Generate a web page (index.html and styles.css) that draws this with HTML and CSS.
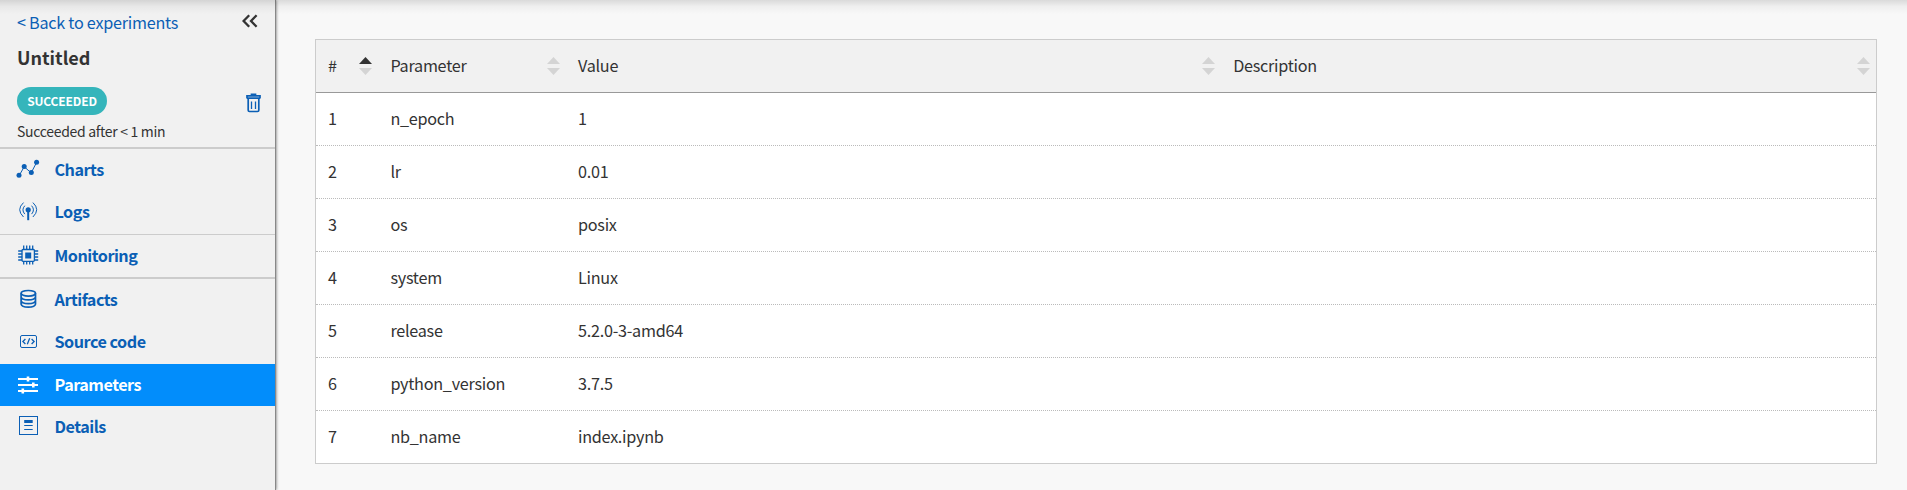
FILE: index.html
```html
<!DOCTYPE html>
<html lang="en">
<head>
<meta charset="utf-8">
<title>Untitled - Parameters</title>
<link rel="stylesheet" href="styles.css">
</head>
<body>
<div class="app">
  <aside class="sidebar">
    <header class="summary">
      <div class="top-row">
        <a class="back">&lt; Back to experiments</a>
        <svg class="collapse" width="16" height="14" viewBox="0 0 16 14"><path d="M7.2 1.2 1.6 7l5.6 5.8M14.6 1.2 9 7l5.6 5.8"/></svg>
      </div>
      <h1 class="title">Untitled</h1>
      <div class="status-row">
        <span class="badge">SUCCEEDED</span>
        <svg class="trash" width="15" height="20" viewBox="0 0 15 20"><path d="M1 5.600V2.900h13v2.700M1 5.200h13M5.500 2.400V1.300h4v1.100M2.200 5v12.200q0 1.300 1.300 1.300h8q1.300 0 1.300-1.300V5"/><path class="thin" d="M5.500 8.500v7.500M9.500 8.500v7.500"/></svg>
      </div>
      <p class="after">Succeeded after &lt; 1 min</p>
    </header>
    <nav>
      <div class="group">
        <a class="item"><svg class="icon" width="24" height="24" viewBox="0 0 24 24"><path class="line" d="M3 18.8 8.2 9.8l7 6 5.2-10"/><g class="solid"><circle cx="3" cy="18.3" r="2.5"/><circle cx="8.2" cy="9.5" r="2.5"/><circle cx="15.3" cy="15.6" r="2.5"/><circle cx="20.6" cy="5.3" r="2.5"/></g></svg><span class="label">Charts</span></a>
        <a class="item"><svg class="icon low" width="24" height="24" viewBox="0 0 24 24"><circle class="solid" cx="12.2" cy="9.8" r="2.6"/><path class="line heavy" d="M12.200 10v10.200"/><path class="line" d="M7.500 2.600q-7.600 7 0 14.400M16.900 2.600q7.600 7 0 14.400M8.800 5.700q-3.700 4.200 0 8.400M15.600 5.700q3.700 4.200 0 8.400"/></svg><span class="label">Logs</span></a>
      </div>
      <div class="group single">
        <a class="item"><svg class="icon" width="24" height="24" viewBox="0 0 24 24"><rect class="line mid" x="6" y="6.500" width="12.400" height="11.800" rx="1"/><path class="solid" d="M9.200 9.500h6v6h-6z"/><path class="line mid" d="M7.700 2.500v4M10.700 2.500v4M13.700 2.500v4M16.700 2.500v4M7.700 18.500v3M10.700 18.500v3M13.700 18.500v3M16.700 18.500v3M2.200 8h4M2.200 11h4M2.200 14h4M2.200 17h4M18.200 8h4M18.200 11h4M18.200 14h4M18.200 17h4"/></svg><span class="label">Monitoring</span></a>
      </div>
      <div class="group last">
        <a class="item"><svg class="icon" width="24" height="24" viewBox="0 0 24 24"><g class="line wide"><ellipse cx="12.300" cy="6.300" rx="7.200" ry="2.800"/><path d="M5.100 6.300v10.900q.5 3 7.200 3t7.200-3V6.300M5.100 9.800q.5 3 7.200 3t7.200-3M5.100 13.600q.5 3 7.200 3t7.200-3"/></g></svg><span class="label">Artifacts</span></a>
        <a class="item spaced"><svg class="icon low" width="24" height="24" viewBox="0 0 24 24"><rect class="line" x="4.500" y="5.500" width="16" height="12" rx="1.500"/><path class="line mid" d="M9.400 9l-2.500 2.500 2.500 2.500M15.600 9l2.500 2.500-2.500 2.500M13.700 8.300l-2.400 6"/></svg><span class="label">Source code</span></a>
        <a class="item active"><svg class="icon" width="24" height="24" viewBox="0 0 24 24"><path class="line heavy" d="M2 7h20M2 13h20M2 19h20"/><path class="solid" d="M10.700 4.500h2.600v5h-2.600zM16 10.500h2.600v5H16zM5.500 16.500h2.600v5H5.500z"/></svg><span class="label">Parameters</span></a>
        <a class="item"><svg class="icon low" width="24" height="24" viewBox="0 0 24 24"><rect class="line" x="3.500" y="1.500" width="18" height="18"/><path class="solid" d="M8.200 5h8.500v3H8.200z"/><path class="line" d="M8.200 10.500h8.500M8.200 14.500h8.500"/></svg><span class="label">Details</span></a>
      </div>
    </nav>
  </aside>
  <main class="content">
    <table class="params">
      <thead>
        <tr>
          <th>#<svg class="sort asc" width="13" height="18" viewBox="0 0 13 18"><path class="up" d="M6.500 0 13 7H0z"/><path d="M0 11h13l-6.500 7z"/></svg></th>
          <th>Parameter<svg class="sort" width="13" height="18" viewBox="0 0 13 18"><path class="up" d="M6.500 0 13 7H0z"/><path d="M0 11h13l-6.500 7z"/></svg></th>
          <th>Value<svg class="sort" width="13" height="18" viewBox="0 0 13 18"><path class="up" d="M6.500 0 13 7H0z"/><path d="M0 11h13l-6.500 7z"/></svg></th>
          <th>Description<svg class="sort" width="13" height="18" viewBox="0 0 13 18"><path class="up" d="M6.500 0 13 7H0z"/><path d="M0 11h13l-6.500 7z"/></svg></th>
        </tr>
      </thead>
      <tbody>
        <tr><td>1</td><td>n_epoch</td><td>1</td><td></td></tr>
        <tr><td>2</td><td>lr</td><td>0.01</td><td></td></tr>
        <tr><td>3</td><td>os</td><td>posix</td><td></td></tr>
        <tr><td>4</td><td>system</td><td>Linux</td><td></td></tr>
        <tr><td>5</td><td>release</td><td>5.2.0-3-amd64</td><td></td></tr>
        <tr><td>6</td><td>python_version</td><td>3.7.5</td><td></td></tr>
        <tr><td>7</td><td>nb_name</td><td>index.ipynb</td><td></td></tr>
      </tbody>
    </table>
  </main>
  <div class="top-shadow"></div>
</div>
</body>
</html>
```
FILE: styles.css
```css
* { box-sizing: border-box; }
body {
  margin: 0;
  font-family: "Noto Sans CJK SC", "Noto Sans", sans-serif;
  font-size: 16.2px;
  line-height: 24px;
  letter-spacing: -.26px;
  color: #333;
  background: #f8f8f8;
}
.app { display: flex; height: 490px; position: relative; overflow: hidden; }
.sidebar {
  width: 275px;
  flex: none;
  background: #f1f1f1;
  box-shadow: 1px 0 0 #888, 1px 0 3px rgba(0, 0, 0, .6);
}
.summary { height: 149px; padding: 10px 15px 0 17px; border-bottom: 2px solid #ccc; }
.top-row, .status-row { display: flex; justify-content: space-between; }
.back { color: #0b5fb5; }
.collapse { margin: 4px 2px 0 0; fill: none; stroke: #333; stroke-width: 2.3; }
.title { margin: 9px 0 0; font-size: 18px; line-height: 28px; font-weight: 700; letter-spacing: 0; }
.status-row { margin-top: 16px; }
.badge {
  width: 90px;
  height: 28px;
  border-radius: 14px;
  background: #35b5bb;
  color: #fff;
  font-size: 12px;
  line-height: 28px;
  font-weight: 700;
  letter-spacing: -.15px;
  text-align: center;
}
.trash { margin: 6px -1px 0 0; fill: none; stroke: #0b5fb5; stroke-width: 1.7; }
.trash .thin { stroke-width: 1.3; }
.after { margin: 4px 0 0; font-size: 14px; line-height: 24px; letter-spacing: -.3px; }
.group { height: 86px; border-bottom: 1px solid #ccc; }
.group.single { height: 44px; border-bottom-width: 2px; }
.group.last { height: auto; border: 0; }
.item {
  display: flex;
  align-items: center;
  height: 42px;
  padding-left: 16px;
  gap: 14.5px;
  color: #0b5fb5;
  font-weight: 700;
  letter-spacing: -.5px;
}
.item.spaced { margin-bottom: 1px; }
.item.active { background: #028dfb; color: #fff; }
.icon { fill: none; margin-bottom: 2px; }
.icon.low { margin-bottom: 0; }
.label { margin-bottom: 2px; }
.line { stroke: currentColor; stroke-width: 1; fill: none; }
.line.mid { stroke-width: 1.3; }
.line.wide { stroke-width: 1.7; }
.line.heavy { stroke-width: 2; }
.solid { fill: currentColor; }
.content { flex: 1; padding: 39px 30px 0 40px; }
.params, .params thead, .params tbody { display: block; }
.params {
  width: 1562px;
  border: 1px solid #ccc;
  background: #fff;
}
.params tr {
  display: grid;
  grid-template-columns: 62.4px 187.6px 655.2px 1fr;
  height: 53px;
  border-bottom: 1px dotted #bbb;
}
.params thead tr { background: #f1f1f1; border-bottom: 1px solid #999; }
.params tbody tr:last-child { height: 52px; border-bottom: 0; }
.params th, .params td {
  display: flex;
  align-items: center;
  justify-content: space-between;
  padding: 0 6px 2px 12px;
  font-weight: 400;
}
.sort { fill: #d4d4d4; margin-top: 2px; }
.sort.asc .up { fill: #333; }
.top-shadow {
  position: absolute;
  inset: 0 0 auto 0;
  height: 14px;
  background: linear-gradient(rgba(0, 0, 0, .12), rgba(0, 0, 0, .04) 45%, rgba(0, 0, 0, 0));
}
```
